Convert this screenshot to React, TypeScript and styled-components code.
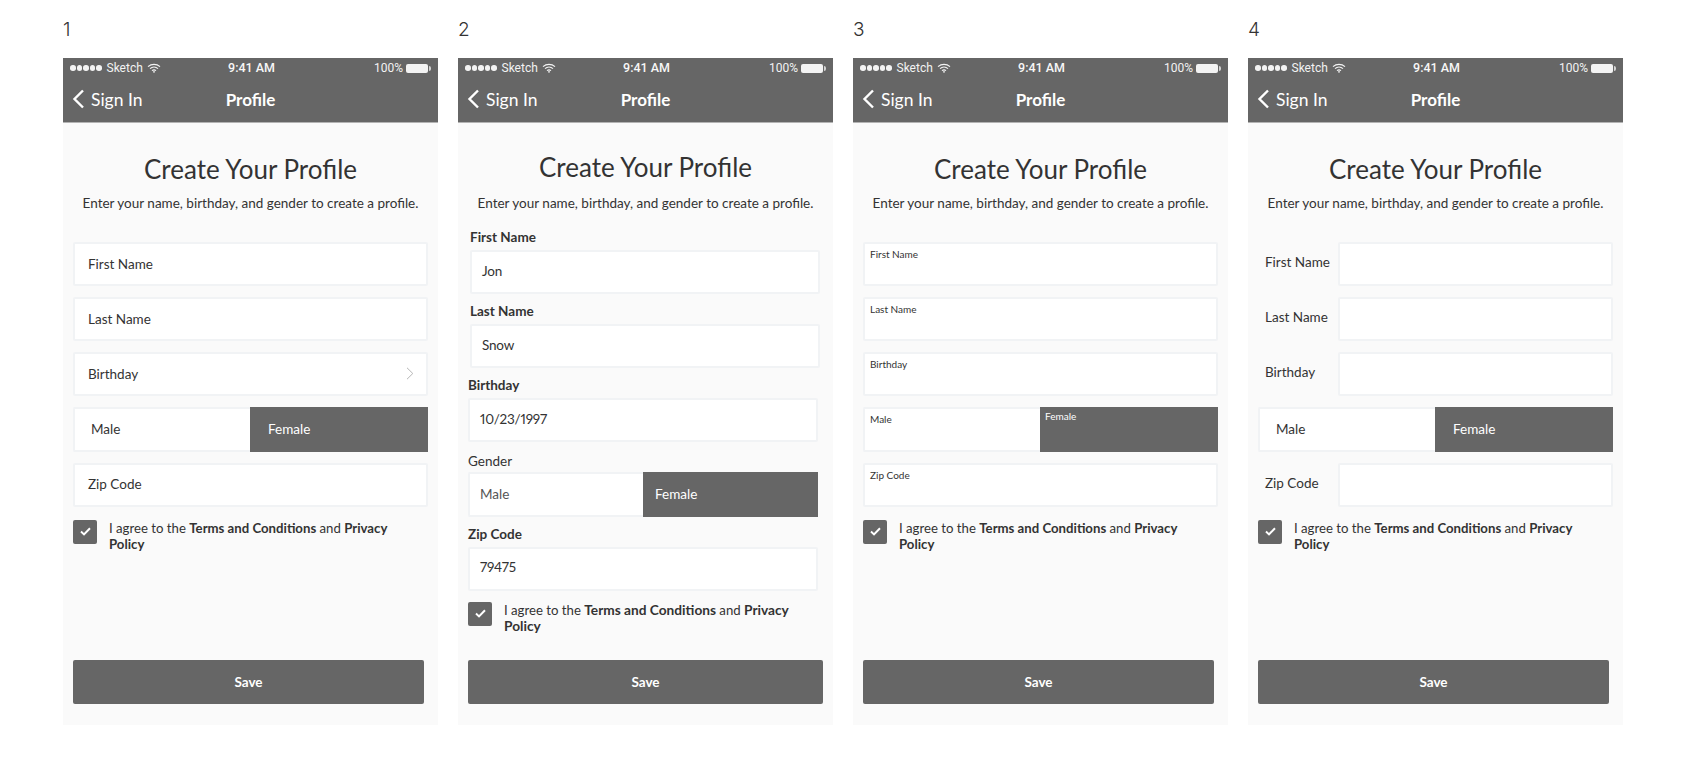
import styled, { createGlobalStyle } from "styled-components";

const GlobalStyle = createGlobalStyle`
  html, body {
    margin: 0;
    background: #fff;
    font-family: Lato, "Open Sans", sans-serif;
    color: #333;
  }
`;

function Wifi() {
  return (
    <svg width="14" height="10" viewBox="0 0 14 10" fill="none" stroke="#fff" strokeWidth="1.2">
      <path d="M1 3.6C4.4.6 9.6.6 13 3.6" />
      <path d="M3 5.6c2.3-2 5.7-2 8 0" />
      <path d="M5 7.6c1.2-1 2.8-1 4 0" />
      <path d="M7 10 5.8 8.7c.7-.5 1.7-.5 2.4 0z" fill="#fff" stroke="none" />
    </svg>
  );
}

function Back() {
  return (
    <svg width="13" height="20" viewBox="0 0 13 20" fill="none" stroke="#fff" strokeWidth="2.4">
      <path d="M11 1.5 2.5 10l8.5 8.5" />
    </svg>
  );
}

function Check() {
  return (
    <svg width="11" height="9" viewBox="0 0 11 9" fill="none" stroke="#fff" strokeWidth="2">
      <path d="M1 4.6 4 7.4 10 1.2" />
    </svg>
  );
}

function Chevron() {
  return (
    <svg width="8" height="13" viewBox="0 0 8 13" fill="none" stroke="#b5b5b5" strokeWidth="1">
      <path d="M1 .8 6.8 6.5 1 12.2" />
    </svg>
  );
}

function PhoneTop() {
  return (
    <>
      <StatusBar>
        <StatusSide>
          <Signal>
            <Dot />
            <Dot />
            <Dot />
            <Dot />
            <Dot />
          </Signal>
          Sketch <Wifi />
        </StatusSide>
        <StatusTime>9:41 AM</StatusTime>
        <StatusSide $right>
          100%
          <Battery />
        </StatusSide>
      </StatusBar>
      <NavBar>
        <BackLink>
          <Back />
          Sign In
        </BackLink>
        <NavTitle>Profile</NavTitle>
      </NavBar>
    </>
  );
}

function Intro({ raised }: { raised?: boolean }) {
  return (
    <IntroBlock>
      <Title $raised={raised}>Create Your Profile</Title>
      <Subtitle>Enter your name, birthday, and gender to create a profile.</Subtitle>
    </IntroBlock>
  );
}

function Agree({ wide }: { wide?: boolean }) {
  return (
    <AgreeRow>
      <CheckBox>
        <Check />
      </CheckBox>
      <AgreeText $wide={wide}>
        I agree to the <b>Terms and Conditions</b> and <b>Privacy</b> <b>Policy</b>
      </AgreeText>
    </AgreeRow>
  );
}

function PlaceholderScreen() {
  return (
    <Form>
      <Field>First Name</Field>
      <Field>Last Name</Field>
      <Field>
        Birthday
        <Chevron />
      </Field>
      <Toggle>
        <ToggleSide>Male</ToggleSide>
        <ToggleSide $active>Female</ToggleSide>
      </Toggle>
      <Field>Zip Code</Field>
    </Form>
  );
}

function StackedScreen() {
  return (
    <StackedForm>
      <Group $inset={2}>
        <GroupLabel>First Name</GroupLabel>
        <ValueField>Jon</ValueField>
      </Group>
      <Group $inset={2}>
        <GroupLabel>Last Name</GroupLabel>
        <ValueField>Snow</ValueField>
      </Group>
      <Group>
        <GroupLabel>Birthday</GroupLabel>
        <ValueField>10/23/1997</ValueField>
      </Group>
      <GenderGroup>
        <GroupLabel $light>Gender</GroupLabel>
        <StackedToggle>
          <StackedSide>Male</StackedSide>
          <StackedSide $active>Female</StackedSide>
        </StackedToggle>
      </GenderGroup>
      <Group>
        <GroupLabel>Zip Code</GroupLabel>
        <ValueField>79475</ValueField>
      </Group>
    </StackedForm>
  );
}

function InsetScreen() {
  return (
    <Form>
      <InsetField>First Name</InsetField>
      <InsetField>Last Name</InsetField>
      <InsetField>Birthday</InsetField>
      <Toggle>
        <InsetSide>Male</InsetSide>
        <InsetSide $active>Female</InsetSide>
      </Toggle>
      <InsetField>Zip Code</InsetField>
    </Form>
  );
}

function SideLabelScreen() {
  return (
    <Form>
      <SideRow>
        <SideLabel>First Name</SideLabel>
        <SideField />
      </SideRow>
      <SideRow>
        <SideLabel>Last Name</SideLabel>
        <SideField />
      </SideRow>
      <SideRow>
        <SideLabel>Birthday</SideLabel>
        <SideField />
      </SideRow>
      <Toggle>
        <ToggleSide>Male</ToggleSide>
        <ToggleSide $active>Female</ToggleSide>
      </Toggle>
      <SideRow>
        <SideLabel>Zip Code</SideLabel>
        <SideField />
      </SideRow>
    </Form>
  );
}

const screens = [
  { n: 1, form: <PlaceholderScreen /> },
  { n: 2, form: <StackedScreen />, raised: true, wide: true },
  { n: 3, form: <InsetScreen /> },
  { n: 4, form: <SideLabelScreen /> },
];

export default function App() {
  return (
    <Page>
      <GlobalStyle />
      {screens.map((s) => (
        <Column key={s.n}>
          <Number>{s.n}</Number>
          <Phone>
            <PhoneTop />
            <Body>
              <Intro raised={s.raised} />
              {s.form}
              <Agree wide={s.wide} />
              <SaveButton $wide={s.wide}>Save</SaveButton>
            </Body>
          </Phone>
        </Column>
      ))}
    </Page>
  );
}

const Page = styled.div`
  display: flex;
  gap: 20px;
  padding: 19px 63px 0;
`;

const Column = styled.div`
  width: 375px;
`;

const Number = styled.div`
  height: 22px;
  margin-bottom: 17px;
  font: 300 19px/22px Inter, sans-serif;
  color: #333;
`;

const Phone = styled.div`
  height: 667px;
  display: flex;
  flex-direction: column;
  background: #fafafa;
`;

const StatusBar = styled.div`
  height: 20px;
  padding: 0 5px 0 7px;
  display: grid;
  grid-template-columns: 1fr auto 1fr;
  align-items: center;
  background: #666;
  color: #fff;
  font: 12px/20px Roboto, sans-serif;
`;

const StatusSide = styled.div<{ $right?: boolean }>`
  display: flex;
  align-items: center;
  gap: 4px;
  justify-content: ${(p) => (p.$right ? "flex-end" : "flex-start")};
  opacity: 0.92;
`;

const Signal = styled.span`
  display: flex;
  gap: 1px;
  margin-right: 1px;
`;

const Dot = styled.i`
  width: 5.5px;
  height: 5.5px;
  border-radius: 50%;
  background: #fff;
`;

const StatusTime = styled.div`
  font-weight: 500;
  font-size: 12.5px;
  opacity: 0.95;
`;

const Battery = styled.span`
  position: relative;
  width: 22px;
  height: 9px;
  margin: 0 5px 0 -1px;
  background: #fff;
  border-radius: 2px;
  &::after {
    content: "";
    position: absolute;
    right: -3px;
    top: 2px;
    width: 2px;
    height: 5px;
    background: #ddd;
    border-radius: 0 2px 2px 0;
  }
`;

const NavBar = styled.div`
  box-sizing: border-box;
  height: 45px;
  padding-bottom: 2px;
  position: relative;
  display: flex;
  align-items: center;
  justify-content: center;
  background: #666;
  border-bottom: 1px solid #b3b3b3;
  color: #fff;
`;

const BackLink = styled.div`
  position: absolute;
  left: 9px;
  display: flex;
  align-items: center;
  gap: 6px;
  font-size: 17.5px;
  font-weight: 400;
`;

const NavTitle = styled.div`
  font-size: 17px;
  font-weight: 700;
`;

const Body = styled.div`
  flex: 1;
  display: flex;
  flex-direction: column;
  padding: 0 10px 21px;
`;

const IntroBlock = styled.div`
  padding-top: 32px;
  text-align: center;
`;

const Title = styled.h1<{ $raised?: boolean }>`
  margin: ${(p) => (p.$raised ? "-2px 0 12px" : "0 0 10px")};
  font-size: 26px;
  line-height: 28px;
  font-weight: 400;
  color: #333;
`;

const Subtitle = styled.div`
  font-size: 13.5px;
  line-height: 20px;
  color: #333;
`;

const Form = styled.div`
  margin-top: 29px;
  display: flex;
  flex-direction: column;
  gap: 11px;
`;

const StackedForm = styled.div`
  margin: 16px 0 -2px;
  display: flex;
  flex-direction: column;
  gap: 9px;
`;

const Field = styled.div`
  box-sizing: border-box;
  height: 44px;
  display: flex;
  align-items: center;
  justify-content: space-between;
  padding: 0 12px 1px 13px;
  background: #fff;
  border: 2px solid #f1f3f5;
  border-radius: 2px;
  font-size: 13.5px;
`;

const InsetField = styled(Field)`
  align-items: flex-start;
  padding: 3px 5px;
  font-size: 10px;
  line-height: 14px;
`;

const Group = styled.div<{ $inset?: number }>`
  width: 350px;
  margin-left: ${(p) => p.$inset ?? 0}px;
`;

const GenderGroup = styled(Group)`
  margin-top: 2px;
`;

const GroupLabel = styled.div<{ $light?: boolean }>`
  height: 16px;
  margin-bottom: ${(p) => (p.$light ? 3 : 5)}px;
  font-size: 13.5px;
  line-height: 16px;
  font-weight: ${(p) => (p.$light ? 400 : 700)};
`;

const ValueField = styled(Field)`
  padding: 0 12px 3px 10px;
  font-variant-numeric: proportional-nums;
  letter-spacing: -0.2px;
`;

const Toggle = styled.div`
  box-sizing: border-box;
  height: 44.5px;
  display: flex;
  background: #fff;
  border: 2px solid #f1f3f5;
  border-right: 0;
  border-radius: 2px;
  & > :first-child {
    flex: 0 0 175px;
  }
`;

const StackedToggle = styled(Toggle)`
  color: #555;
  & > :first-child {
    flex: 0 0 173px;
  }
`;

const ToggleSide = styled.div<{ $active?: boolean }>`
  box-sizing: border-box;
  flex: 1;
  display: flex;
  align-items: center;
  padding-left: ${(p) => (p.$active ? 18 : 16)}px;
  margin: ${(p) => (p.$active ? "-2px 0" : 0)};
  background: ${(p) => (p.$active ? "#666" : "transparent")};
  color: ${(p) => (p.$active ? "#fff" : "inherit")};
  font-size: 13.5px;
`;

const StackedSide = styled(ToggleSide)`
  padding-left: ${(p) => (p.$active ? 12 : 10)}px;
`;

const InsetSide = styled.div<{ $active?: boolean }>`
  box-sizing: border-box;
  flex: 1;
  padding: ${(p) => (p.$active ? "2px 0 0 5px" : "3px 0 0 5px")};
  margin: ${(p) => (p.$active ? "-2px 0" : 0)};
  background: ${(p) => (p.$active ? "#666" : "transparent")};
  color: ${(p) => (p.$active ? "#fff" : "inherit")};
  font-size: 10px;
  line-height: 14px;
`;

const SideRow = styled.div`
  display: flex;
  align-items: center;
`;

const SideLabel = styled.div`
  box-sizing: border-box;
  width: 80px;
  padding: 0 0 4px 7px;
  font-size: 13.5px;
`;

const SideField = styled(Field)`
  flex: 1;
`;

const AgreeRow = styled.div`
  margin-top: 13px;
  display: flex;
  gap: 12px;
`;

const CheckBox = styled.div`
  flex: none;
  width: 24px;
  height: 24px;
  display: flex;
  align-items: center;
  justify-content: center;
  background: #666;
  border-radius: 2px;
`;

const AgreeText = styled.div<{ $wide?: boolean }>`
  width: 300px;
  font-size: 13.2px;
  line-height: 16px;
  b {
    font-weight: 700;
    font-size: ${(p) => (p.$wide ? 13.7 : 13.2)}px;
  }
`;

const SaveButton = styled.div<{ $wide?: boolean }>`
  box-sizing: border-box;
  width: ${(p) => (p.$wide ? 355 : 351)}px;
  height: 44.5px;
  margin-top: auto;
  display: flex;
  align-items: center;
  justify-content: center;
  background: #666;
  border-radius: 2px;
  color: #fff;
  font-size: 13.5px;
  font-weight: 700;
`;
